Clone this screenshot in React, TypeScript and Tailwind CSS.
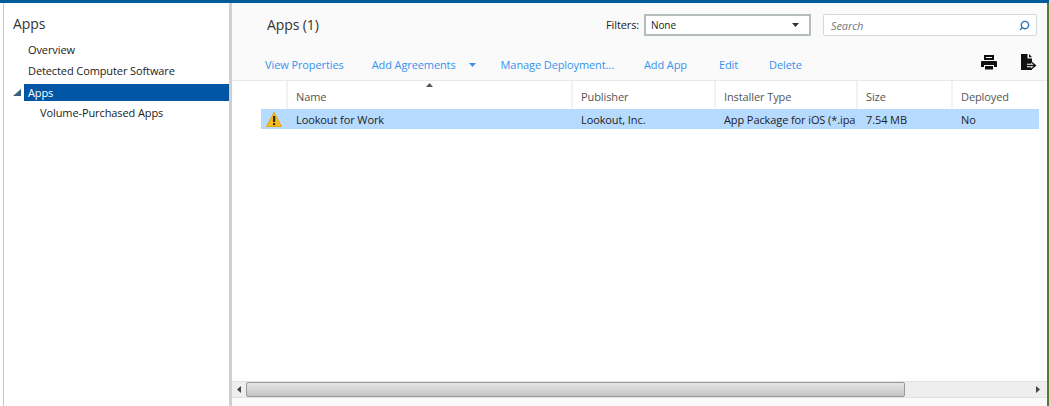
import { Search } from "lucide-react";

const linkClass = "text-[#3592f0] whitespace-nowrap";

const columns = [
  { label: "Name", value: "Lookout for Work", width: "w-[285px]" },
  { label: "Publisher", value: "Lookout, Inc.", width: "w-[143px]" },
  { label: "Installer Type", value: "App Package for iOS (*.ipa)", width: "w-[142px]" },
  { label: "Size", value: "7.54 MB", width: "w-[95px]" },
  { label: "Deployed", value: "No", width: "w-[88px]" },
];

function WarningIcon() {
  return (
    <svg width="16" height="15" viewBox="0 0 16 15">
      <path d="M8 0.5 L15.5 14.5 L0.5 14.5 Z" fill="#f5bd1f" stroke="#e5a50e" strokeLinejoin="round" />
      <rect x="7" y="4" width="2.2" height="6" fill="#3a2c05" />
      <rect x="7" y="11" width="2.2" height="2.2" fill="#3a2c05" />
    </svg>
  );
}

function PrintIcon() {
  return (
    <svg width="16" height="15" viewBox="0 0 16 15" fill="#111">
      <path d="M3 0h10v5H3zM5 2v1h6V2z" fillRule="evenodd" />
      <path d="M1 6h14a1 1 0 0 1 1 1v5h-3v-2H3v2H0V7a1 1 0 0 1 1-1z" />
      <rect x="4" y="11" width="8" height="3.5" />
    </svg>
  );
}

function ExportIcon() {
  return (
    <svg width="16" height="17" viewBox="0 0 16 17" fill="none">
      <path d="M0 0h6.5v4.5H11V16H0z" fill="#111" />
      <path d="M8 0l3 3.2H8z" fill="#111" />
      <path d="M6 11.5h8M11 8.5l3.5 3-3.5 3" stroke="#fff" strokeWidth="3.4" />
      <path d="M6 11.5h8M11 8.5l3.5 3-3.5 3" stroke="#111" strokeWidth="1.3" />
    </svg>
  );
}

export default function App() {
  return (
    <div className="flex flex-col h-[406px] w-[1049px] overflow-hidden bg-white text-[11px] tracking-[-0.1px] text-[#222] font-['Open_Sans',sans-serif]">
      <div className="h-[3px] bg-[#005a9c] shrink-0" />
      <div className="flex flex-1 min-h-0">
        <div className="w-[3px] bg-white" />
        <div className="w-[1px] bg-[#c8c8c8]" />

        {/* left nav */}
        <div className="w-[225px] shrink-0 bg-white">
          <div className="pl-[9px] pt-[11px] text-[14px] leading-[20px] text-[#333]">Apps</div>
          <div className="pl-[24px] pt-[5px] leading-[21px] h-[26px] flex items-end">Overview</div>
          <div className="pl-[24px] leading-[21px] h-[21px]">Detected Computer Software</div>
          <div className="flex items-center h-[17px] mt-[3px]">
            <span className="w-[20px] flex justify-end pr-[3px]">
              <svg width="8" height="8" viewBox="0 0 8 8"><path d="M8 0v7H0z" fill="#3b5f7f" /></svg>
            </span>
            <div className="flex-1 bg-[#0056a4] text-white h-[17px] leading-[17px] pl-[4px]">Apps</div>
          </div>
          <div className="pl-[36px] pt-[4px] leading-[16px]">Volume-Purchased Apps</div>
        </div>

        <div className="w-[3px] bg-[#d0d0d0] shrink-0" />

        {/* main panel */}
        <div className="flex flex-col flex-1 min-w-0 bg-[#fafafa]">
          <div className="flex items-center h-[43px] shrink-0 pt-[1px]">
            <div className="pl-[35px] w-[374px] text-[14px] text-[#333] -mt-[2px]">Apps (1)</div>
            <span className="w-[40px]">Filters:</span>
            <div className="w-[167px] h-[22px] ml-[-2px] border-2 border-[#b4bcbc] bg-white flex items-center justify-between pl-[5px] pr-[10px] text-[10px]">
              None
              <svg width="7" height="4" viewBox="0 0 7 4"><path d="M0 0h7L3.5 4z" fill="#333" /></svg>
            </div>
            <div className="w-[214px] h-[22px] ml-[12px] rounded-[2px] border border-[#d3dada] bg-white flex items-center justify-between pl-[7px] pr-[6px] italic text-[#777] text-[11px]">
              <span className="pt-[2px]">Search</span>
              <Search size={11} strokeWidth={3} className="text-[#2a6cb0] -scale-x-100" />
            </div>
          </div>

          <div className="flex items-center h-[35px] shrink-0 border-b border-[#e8e8e8] pl-[33px] pt-[4px]">
            <span className={linkClass}>View Properties</span>
            <span className={`${linkClass} ml-[28px]`}>Add Agreements</span>
            <svg className="ml-[13px]" width="7" height="4" viewBox="0 0 7 4"><path d="M0 0h7L3.5 4z" fill="#3592f0" /></svg>
            <span className={`${linkClass} ml-[25px]`}>Manage Deployment...</span>
            <span className={`${linkClass} ml-[30px]`}>Add App</span>
            <span className={`${linkClass} ml-[32px]`}>Edit</span>
            <span className={`${linkClass} ml-[31px]`}>Delete</span>
            <div className="ml-auto flex items-center gap-[24px] pr-[10px] -mt-[5px]">
              <PrintIcon />
              <ExportIcon />
            </div>
          </div>

          {/* grid */}
          <div className="flex-1 min-h-0 bg-white pl-[29px]">
            <div className="flex h-[28px] w-[778px]">
              <div className="w-[25px] shrink-0" />
              {columns.map((col, i) => (
                <div key={col.label} className={`${col.width} shrink-0 relative border-l-2 border-[#f0f3f5] pl-[8px] pt-[8px] leading-[16px] text-[#555]`}>
                  {col.label}
                  {i === 0 && (
                    <svg className="absolute left-[138px] top-[2px]" width="7" height="4" viewBox="0 0 7 4"><path d="M3.5 0L7 4H0z" fill="#555" /></svg>
                  )}
                </div>
              ))}
            </div>
            <div className="flex h-[20px] w-[778px] bg-[#b7dbff] items-center">
              <div className="w-[25px] shrink-0 flex justify-center"><WarningIcon /></div>
              {columns.map((col) => (
                <div key={col.label} className={`${col.width} shrink-0 pl-[10px] pr-[3px] pt-[2px] overflow-hidden whitespace-nowrap`}>
                  {col.value}
                </div>
              ))}
            </div>
          </div>

          {/* horizontal scrollbar */}
          <div className="flex items-center h-[17px] shrink-0 bg-[#eeeeee] border-y border-[#e2e2e2]">
            <span className="w-[14px] flex justify-center">
              <svg width="4" height="7" viewBox="0 0 4 7"><path d="M4 0v7L0 3.5z" fill="#444" /></svg>
            </span>
            <div className="w-[659px] h-[15px] rounded-[2px] border border-[#9a9a9a] bg-gradient-to-b from-[#e6e6e6] to-[#c4c4c4]" />
            <span className="ml-auto w-[15px] mr-[2px] flex justify-center">
              <svg width="4" height="7" viewBox="0 0 4 7"><path d="M0 0v7l4-3.5z" fill="#444" /></svg>
            </span>
          </div>
          <div className="h-[8px] shrink-0 bg-[#fafafa]" />
        </div>

        <div className="w-[2px] bg-[#4f7f2e] shrink-0" />
      </div>
    </div>
  );
}
